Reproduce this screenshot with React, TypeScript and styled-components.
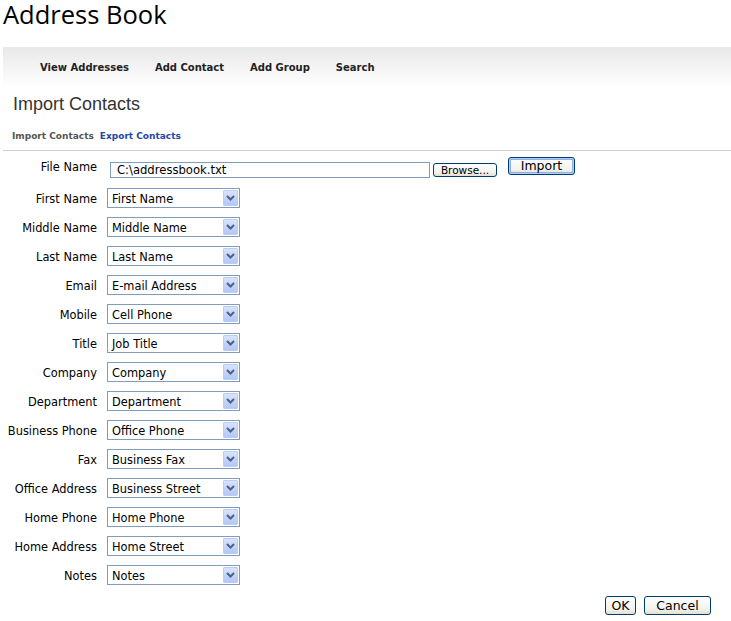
import React from "react";
import styled, { createGlobalStyle } from "styled-components";

const GlobalStyle = createGlobalStyle`
  html, body { margin: 0; padding: 0; background: #fff; }
  body { font-family: "DejaVu Sans", Verdana, sans-serif; color: #000; }
`;

const Page = styled.div`
  width: 728px;
  padding-left: 3px;
`;

const Title = styled.h1`
  margin: 0;
  height: 47px;
  font-family: "Open Sans", "Liberation Sans", sans-serif;
  font-weight: 400;
  font-size: 25.5px;
  line-height: 34px;
  margin-top: -3px;
  margin-bottom: 3px;
  color: #000;
`;

const NavBar = styled.nav`
  height: 40px;
  display: flex;
  align-items: center;
  gap: 26px;
  padding-left: 37px;
  background: linear-gradient(#e8e8e8, #f6f6f6 60%, #ffffff);
`;

const NavItem = styled.a`
  font-family: "DejaVu Sans", Verdana, sans-serif;
  font-weight: bold;
  font-size: 10px;
  color: #222;
  text-decoration: none;
`;

const Heading = styled.h2`
  margin: 6px 0 0 10px;
  font-family: "Liberation Sans", Arial, sans-serif;
  font-weight: 400;
  font-size: 18px;
  line-height: 22px;
  color: #333;
`;

const Tabs = styled.div`
  display: flex;
  gap: 6px;
  margin: 14px 0 0 9px;
  height: 14px;
  align-items: center;
`;

const Tab = styled.a<{ $active?: boolean }>`
  font-family: "DejaVu Sans", Verdana, sans-serif;
  font-weight: bold;
  font-size: 9px;
  color: ${(p) => (p.$active ? "#555" : "#2347a5")};
  text-decoration: none;
`;

const Divider = styled.hr`
  margin: 7px 0 0 0;
  border: 0;
  height: 1px;
  background: #cfcfcf;
`;

const Form = styled.div`
  display: flex;
  flex-direction: column;
  gap: 9px;
  margin-top: 6px;
`;

const Row = styled.div<{ $file?: boolean }>`
  display: flex;
  align-items: ${(p) => (p.$file ? "flex-start" : "center")};
  height: 20px;
  margin-bottom: ${(p) => (p.$file ? "2px" : "0")};
`;

const Label = styled.label<{ $file?: boolean }>`
  width: 94px;
  margin-right: 10px;
  text-align: right;
  font-size: 11.4px;
  line-height: 14px;
  padding-top: ${(p) => (p.$file ? "3px" : "1px")};
  white-space: nowrap;
`;

const SelectBox = styled.div`
  box-sizing: border-box;
  width: 133px;
  height: 20px;
  border: 1px solid #7f9db9;
  background: #fff;
  display: flex;
  align-items: center;
  padding: 1px;
`;

const SelectText = styled.span`
  flex: 1;
  padding-left: 3px;
  padding-top: 1px;
  font-size: 11.4px;
  line-height: 14px;
  white-space: nowrap;
`;

const Arrow = styled.span`
  box-sizing: border-box;
  width: 15px;
  height: 16px;
  display: flex;
  align-items: center;
  justify-content: center;
  border: 1px solid #bccdf5;
  border-radius: 1px;
  background: linear-gradient(#d9e3fb, #c1d2f9 60%, #b4c8f6);
`;

const FileInput = styled.div`
  box-sizing: border-box;
  width: 320px;
  height: 16px;
  margin: 5px 0 0 3px;
  border: 1px solid #7f9db9;
  padding-left: 6px;
  font-size: 11.6px;
  line-height: 14px;
  white-space: nowrap;
`;

const XPButton = styled.button<{ $default?: boolean }>`
  box-sizing: border-box;
  border: 1px solid #003c74;
  border-radius: 3px;
  background: linear-gradient(#ffffff, #f3f2ec 70%, #e3e0d2);
  font-family: "DejaVu Sans", Verdana, sans-serif;
  color: #000;
  padding: 0;
  box-shadow: ${(p) =>
    p.$default ? "inset 0 0 0 1px #b7cdf3, inset 0 0 0 2px #8eb0ea" : "none"};
`;

const BrowseButton = styled(XPButton)`
  width: 64px;
  height: 14px;
  margin: 6px 0 0 3px;
  font-size: 10.5px;
  line-height: 11px;
`;

const ImportButton = styled(XPButton)`
  width: 67px;
  height: 18px;
  margin: 0 0 0 11px;
  font-size: 12.5px;
  line-height: 14px;
`;

const Footer = styled.div`
  display: flex;
  justify-content: flex-end;
  gap: 8px;
  margin-top: 11px;
  padding-right: 20px;
`;

const OkButton = styled(XPButton)`
  width: 31px;
  height: 19px;
  font-size: 12.5px;
`;

const CancelButton = styled(XPButton)`
  width: 67px;
  height: 19px;
  font-size: 12.5px;
`;

const Chevron = () => (
  <svg width="9" height="6" viewBox="0 0 9 6">
    <path d="M1 1 L4.5 4.5 L8 1" fill="none" stroke="#4d6185" strokeWidth="2" />
  </svg>
);

const fields: [string, string][] = [
  ["First Name", "First Name"],
  ["Middle Name", "Middle Name"],
  ["Last Name", "Last Name"],
  ["Email", "E-mail Address"],
  ["Mobile", "Cell Phone"],
  ["Title", "Job Title"],
  ["Company", "Company"],
  ["Department", "Department"],
  ["Business Phone", "Office Phone"],
  ["Fax", "Business Fax"],
  ["Office Address", "Business Street"],
  ["Home Phone", "Home Phone"],
  ["Home Address", "Home Street"],
  ["Notes", "Notes"],
];

export default function App() {
  return (
    <>
      <GlobalStyle />
      <Page>
        <Title>Address Book</Title>
        <NavBar>
          <NavItem>View Addresses</NavItem>
          <NavItem>Add Contact</NavItem>
          <NavItem>Add Group</NavItem>
          <NavItem>Search</NavItem>
        </NavBar>
        <Heading>Import Contacts</Heading>
        <Tabs>
          <Tab $active>Import Contacts</Tab>
          <Tab>Export Contacts</Tab>
        </Tabs>
        <Divider />
        <Form>
          <Row $file>
            <Label $file>File Name</Label>
            <FileInput>C:\addressbook.txt</FileInput>
            <BrowseButton>Browse...</BrowseButton>
            <ImportButton $default>Import</ImportButton>
          </Row>
          {fields.map(([label, value]) => (
            <Row key={label}>
              <Label>{label}</Label>
              <SelectBox>
                <SelectText>{value}</SelectText>
                <Arrow>
                  <Chevron />
                </Arrow>
              </SelectBox>
            </Row>
          ))}
        </Form>
        <Footer>
          <OkButton>OK</OkButton>
          <CancelButton>Cancel</CancelButton>
        </Footer>
      </Page>
    </>
  );
}
